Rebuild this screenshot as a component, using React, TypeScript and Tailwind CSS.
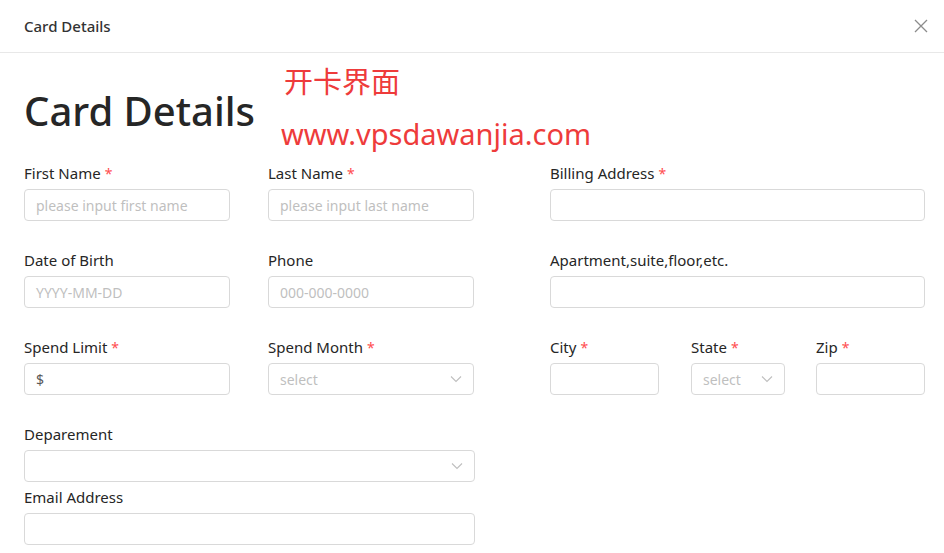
import React from "react";

const font = { fontFamily: '"Noto Sans", "Open Sans", "Noto Sans CJK SC", sans-serif' };

function Label({ text, req }: { text: string; req?: boolean }) {
  return (
    <div className="h-[22px] text-[15px] leading-[22px] text-[#262626] mb-[5px] whitespace-nowrap">
      {text}
      {req && <span className="text-[#ff4d4f] ml-[4px] text-[14px]">*</span>}
    </div>
  );
}

function Input({ placeholder, prefix }: { placeholder?: string; prefix?: string }) {
  return (
    <div className="h-[32px] w-full rounded-[4px] border border-[#d9d9d9] bg-white flex items-center px-[11px] text-[14px]">
      {prefix && <span className="text-[#595959] mr-1">{prefix}</span>}
      <span className="text-[#bfbfbf] whitespace-nowrap">{placeholder}</span>
    </div>
  );
}

function Chevron() {
  return (
    <svg width="12" height="12" viewBox="0 0 12 12" fill="none" className="shrink-0">
      <path d="M1 3.5 L6 8.5 L11 3.5" stroke="#bfbfbf" strokeWidth="1.1" />
    </svg>
  );
}

function Select({ placeholder }: { placeholder?: string }) {
  return (
    <div className="h-[32px] w-full rounded-[4px] border border-[#d9d9d9] bg-white flex items-center justify-between pl-[11px] pr-[11px] text-[14px]">
      <span className="text-[#bfbfbf]">{placeholder}</span>
      <Chevron />
    </div>
  );
}

function Field({ label, req, children, className }: { label: string; req?: boolean; children: React.ReactNode; className?: string }) {
  return (
    <div className={className}>
      <Label text={label} req={req} />
      {children}
    </div>
  );
}

export default function App() {
  return (
    <div className="w-[944px] h-[553px] bg-white overflow-hidden relative" style={font}>
      <div className="h-[53px] border-b border-[#e8e8e8] flex items-center justify-between pl-[24px] pr-[16px]">
        <div className="text-[15px] font-medium text-[#333]">Card Details</div>
        <svg width="14" height="14" viewBox="0 0 14 14">
          <path d="M1 1 L13 13 M13 1 L1 13" stroke="#8c8c8c" strokeWidth="1.3" />
        </svg>
      </div>

      <div className="px-[24px]">
        <h1 className="text-[40px] font-medium text-[#262626] leading-[48px] mt-[34px] mb-[27px]">Card Details</h1>

        <div className="flex">
          <div className="w-[450px] shrink-0">
            <div className="grid grid-cols-[206px_206px] gap-x-[38px] gap-y-[28px]">
              <Field label="First Name" req>
                <Input placeholder="please input first name" />
              </Field>
              <Field label="Last Name" req>
                <Input placeholder="please input last name" />
              </Field>
              <Field label="Date of Birth">
                <Input placeholder="YYYY-MM-DD" />
              </Field>
              <Field label="Phone">
                <Input placeholder="000-000-0000" />
              </Field>
              <Field label="Spend Limit" req>
                <Input prefix="$" />
              </Field>
              <Field label="Spend Month" req>
                <Select placeholder="select" />
              </Field>
            </div>
            <Field label="Deparement" className="mt-[28px] w-[451px]">
              <Select />
            </Field>
            <Field label="Email Address" className="mt-[4px] w-[451px]">
              <Input />
            </Field>
          </div>

          <div className="ml-[76px] w-[375px] flex flex-col gap-y-[28px]">
            <Field label="Billing Address" req>
              <Input />
            </Field>
            <Field label="Apartment,suite,floor,etc.">
              <Input />
            </Field>
            <div className="flex">
              <Field label="City" req className="w-[109px]">
                <Input />
              </Field>
              <Field label="State" req className="w-[94px] ml-[32px]">
                <Select placeholder="select" />
              </Field>
              <Field label="Zip" req className="w-[109px] ml-[31px]">
                <Input />
              </Field>
            </div>
          </div>
        </div>
      </div>

      <div className="absolute left-[284px] top-[62px] text-[29px] leading-[36px] text-[#ee3b3b]" style={{ fontFamily: '"Noto Sans CJK SC", sans-serif' }}>
        开卡界面
      </div>
      <div className="absolute left-[281px] top-[114px] text-[29px] leading-[40px] text-[#ee3b3b]" style={{ fontFamily: '"Noto Sans", sans-serif' }}>
        www.vpsdawanjia.com
      </div>
    </div>
  );
}
